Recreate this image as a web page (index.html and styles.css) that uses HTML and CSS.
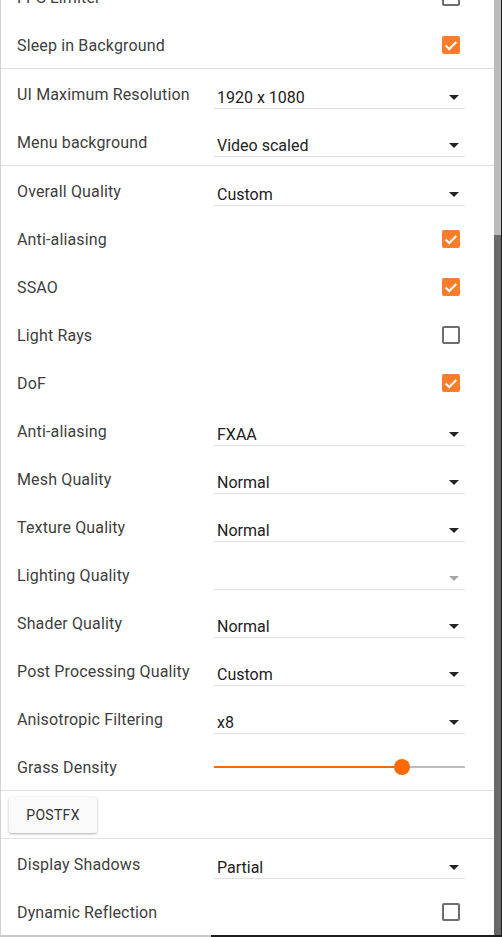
FILE: index.html
```html
<!DOCTYPE html>
<html>
<head>
<meta charset="utf-8">
<link rel="stylesheet" href="styles.css">
</head>
<body>
<div class="frame">
  <div class="main">
    <div class="content">
      <div class="section">
        <div class="row"><span class="label">FPS Limiter</span><span class="cb"></span></div>
        <div class="row"><span class="label">Sleep in Background</span><span class="cb on"></span></div>
      </div>
      <div class="section">
        <div class="row"><span class="label">UI Maximum Resolution</span><div class="select"><span>1920 x 1080</span><i class="arrow"></i></div></div>
        <div class="row"><span class="label">Menu background</span><div class="select"><span>Video scaled</span><i class="arrow"></i></div></div>
      </div>
      <div class="section">
        <div class="row"><span class="label">Overall Quality</span><div class="select"><span>Custom</span><i class="arrow"></i></div></div>
        <div class="row"><span class="label">Anti-aliasing</span><span class="cb on"></span></div>
        <div class="row"><span class="label">SSAO</span><span class="cb on"></span></div>
        <div class="row"><span class="label">Light Rays</span><span class="cb"></span></div>
        <div class="row"><span class="label">DoF</span><span class="cb on"></span></div>
        <div class="row"><span class="label">Anti-aliasing</span><div class="select"><span>FXAA</span><i class="arrow"></i></div></div>
        <div class="row"><span class="label">Mesh Quality</span><div class="select"><span>Normal</span><i class="arrow"></i></div></div>
        <div class="row"><span class="label">Texture Quality</span><div class="select"><span>Normal</span><i class="arrow"></i></div></div>
        <div class="row"><span class="label dim">Lighting Quality</span><div class="select disabled"><span></span><i class="arrow"></i></div></div>
        <div class="row"><span class="label">Shader Quality</span><div class="select"><span>Normal</span><i class="arrow"></i></div></div>
        <div class="row"><span class="label">Post Processing Quality</span><div class="select"><span>Custom</span><i class="arrow"></i></div></div>
        <div class="row"><span class="label">Anisotropic Filtering</span><div class="select"><span>x8</span><i class="arrow"></i></div></div>
        <div class="row"><span class="label">Grass Density</span>
          <div class="slider"><div class="fill" style="width:75%"></div><div class="thumb"></div><div class="rest"></div></div>
        </div>
      </div>
      <div class="section btn-section">
        <button class="btn">POSTFX</button>
      </div>
      <div class="section last">
        <div class="row"><span class="label">Display Shadows</span><div class="select"><span>Partial</span><i class="arrow"></i></div></div>
        <div class="row"><span class="label">Dynamic Reflection</span><span class="cb"></span></div>
      </div>
    </div>
  </div>
  <div class="scrollbar"><div class="track"></div><div class="thumb-bar"></div></div>
</div>
<div class="bottom"><div class="bottom-light"></div></div>
</body>
</html>
```
FILE: styles.css
```css
html, body {
  margin: 0;
  padding: 0;
}
body {
  width: 502px;
  height: 937px;
  overflow: hidden;
  background: #1e1e1e;
  font-family: Roboto, "Liberation Sans", sans-serif;
  color: #3c3c3c;
}
.frame {
  display: flex;
  height: 935px;
}
.main {
  width: 493px;
  background: #fff;
  border-left: 1px solid #d2d2d2;
  overflow: hidden;
}
.content {
  margin-top: -28px;
}
.section {
  border-bottom: 1px solid #e0e0e0;
}
.section.last {
  border-bottom: none;
}
.row {
  height: 48px;
  display: grid;
  grid-template-columns: 197px 1fr;
  align-items: center;
  padding: 0 29px 0 16px;
}
.label {
  font-size: 16px;
  line-height: 20px;
  margin-top: 4px;
  letter-spacing: 0.15px;
  color: #404040;
}
.cb {
  justify-self: end;
  margin-right: 5px;
  width: 18px;
  height: 18px;
  box-sizing: border-box;
  border: 2px solid #6e6e6e;
  border-radius: 2px;
  position: relative;
  top: 1px;
}
.cb.on {
  border: none;
  background: #fb7d2b;
}
.cb.on::after {
  content: "";
  position: absolute;
  left: 6px;
  top: 2.5px;
  width: 4px;
  height: 9px;
  border-right: 2px solid #fff;
  border-bottom: 2px solid #fff;
  transform: rotate(45deg);
  box-sizing: content-box;
}
.select {
  height: 30px;
  box-sizing: border-box;
  padding-top: 9px;
  border-bottom: 1px solid #e0e0e0;
  display: flex;
  align-items: center;
  justify-content: space-between;
  position: relative;
  top: 1px;
}
.select span {
  font-size: 16px;
  line-height: 20px;
  color: #222;
  padding-left: 3px;
}
.arrow {
  width: 0;
  height: 0;
  border-left: 5px solid transparent;
  border-right: 5px solid transparent;
  border-top: 5px solid #222;
  margin-right: 6px;
  margin-top: -2px;
}
.select.disabled .arrow {
  border-top-color: #a8a8a8;
}
.slider {
  height: 16px;
  display: flex;
  align-items: center;
  position: relative;
  top: 1px;
}
.fill {
  height: 2px;
  background: #ff6a00;
  flex: none;
}
.thumb {
  width: 16px;
  height: 16px;
  border-radius: 50%;
  background: #ff6a00;
  margin-left: -8px;
  margin-right: -8px;
  flex: none;
  position: relative;
  z-index: 1;
}
.rest {
  flex: 1;
  height: 2px;
  background: #bdbdbd;
}
.btn-section {
  height: 48px;
  box-sizing: border-box;
  padding: 6px 0 0 8px;
}
.btn {
  width: 88px;
  height: 36px;
  border: none;
  border-radius: 2px;
  background: #fafafa;
  box-shadow: 0 1px 3px rgba(0,0,0,0.25), 0 1px 1px rgba(0,0,0,0.08);
  font-family: Roboto, "Liberation Sans", sans-serif;
  font-size: 14px;
  color: #333;
  letter-spacing: 0.3px;
  padding: 0;
}
.scrollbar {
  width: 7px;
  display: flex;
  flex-direction: column;
}
.track {
  height: 235px;
  background: #bcbcbc;
}
.thumb-bar {
  flex: 1;
  background: #696969;
}
.bottom {
  height: 2px;
  background: #1e1e1e;
}
.bottom-light {
  width: 211px;
  height: 2px;
  background: #c8c8c8;
}
```
